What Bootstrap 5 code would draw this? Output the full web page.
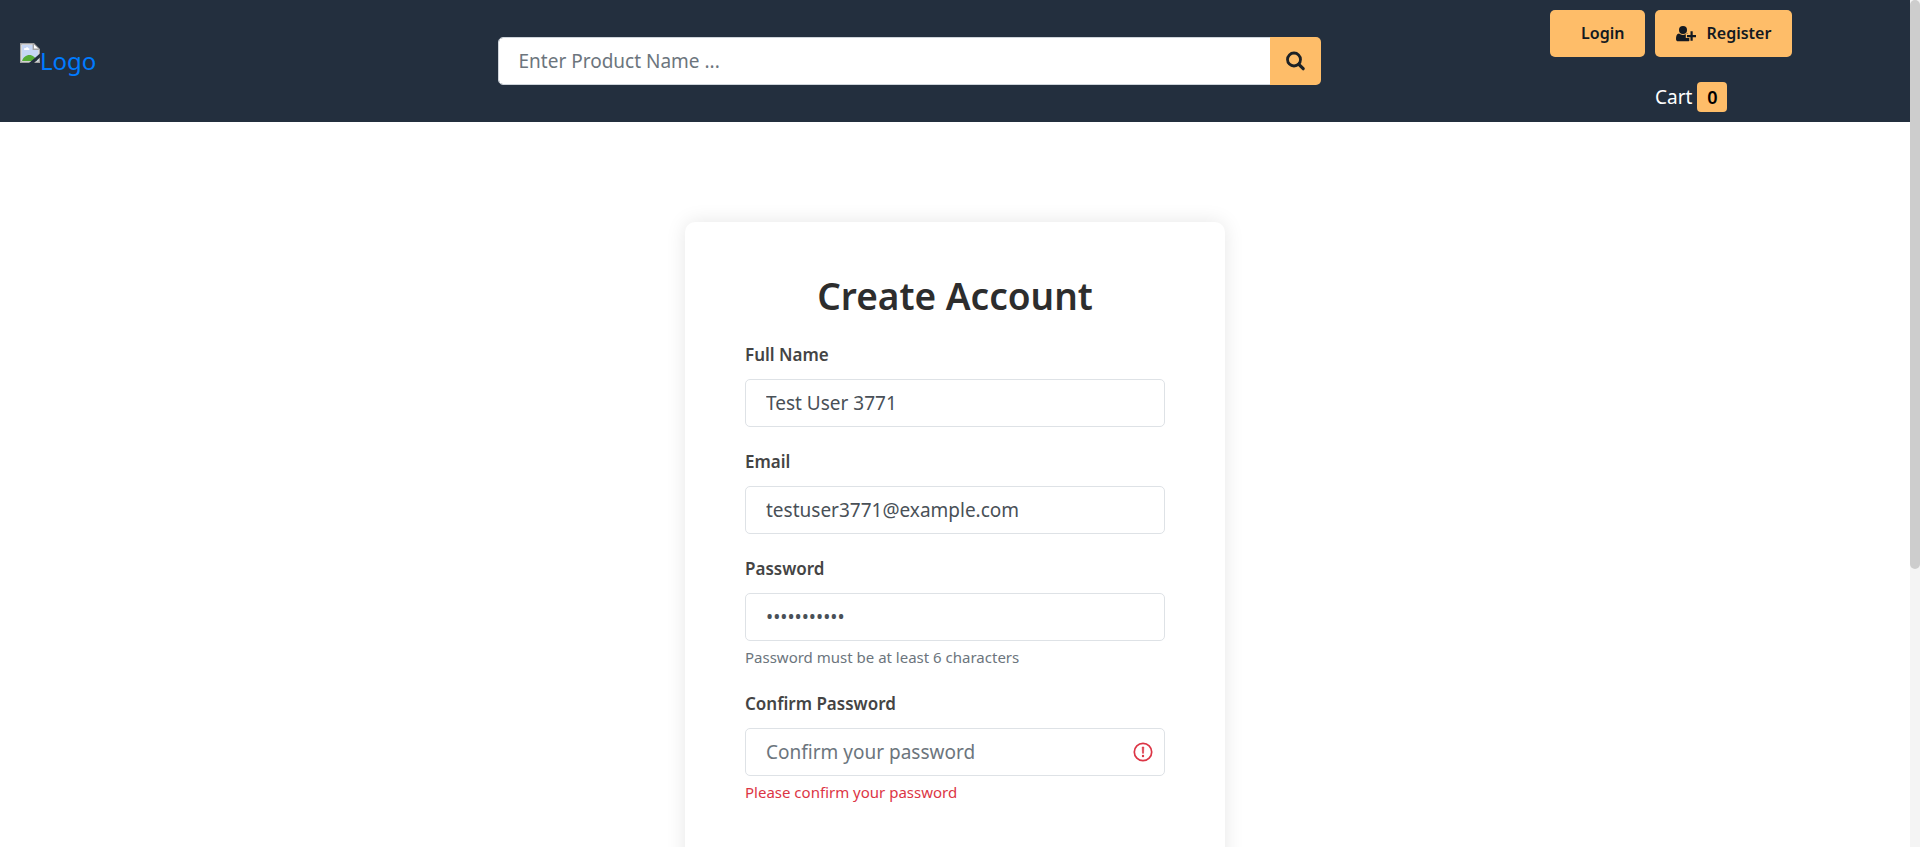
<!DOCTYPE html>
<html lang="en">
<head>
<meta charset="utf-8">
<meta name="viewport" content="width=device-width, initial-scale=1">
<title>Create Account</title>
<link href="https://cdn.jsdelivr.net/npm/bootstrap@5.3.0/dist/css/bootstrap.min.css" rel="stylesheet">
<style>
  :root { --amber: #febd69; --navy: #232f3e; }
  body { font-family: "Noto Sans", "Open Sans", sans-serif; padding-right: 10px; }
  .site-header { background: var(--navy); padding: 10px 0; }
  .site-header > .row > * { padding-left: 20px; padding-right: 20px; }
  .brand { color: #007bff; font-size: 24px; line-height: 36px; }
  .brand svg { margin-bottom: 16px; }
  .form-control {
    height: 48px; padding: 0 20px; border: 1px solid #dee2e6; border-radius: 5px;
    font-size: 19px; color: #495057;
  }
  .form-control::placeholder { color: #6c757d; }
  .search-form { width: 90%; }
  .search-form .form-control { border-color: #ced4da; }
  .btn-amber {
    --bs-btn-bg: var(--amber); --bs-btn-color: #131921; --bs-btn-hover-bg: #f3a847;
    --bs-btn-border-width: 0; --bs-btn-border-radius: 5px;
    --bs-btn-font-size: 16px; --bs-btn-font-weight: 600; --bs-btn-line-height: 47px;
    --bs-btn-padding-x: 21px; --bs-btn-padding-y: 0;
  }
  .search-form .btn-amber { --bs-btn-padding-x: 15px; }
  .btn-text { margin-left: 10px; }
  .account-links { gap: 10px; }
  .cart-link { margin-top: 25px; padding-left: 40px; gap: 5px; font-size: 19px; line-height: 30px; }
  .cart-count { width: 30px; height: 30px; padding: 0; border-radius: 4px; background: var(--amber); color: #000; font-size: 18px; font-weight: 600; line-height: 30px; }
  .signup-card {
    max-width: 540px; margin: 100px auto 0; padding: 50px 60px;
    border-radius: 10px; background: #fff; box-shadow: 0 0 20px rgba(0, 0, 0, .1);
  }
  .signup-card h1 { margin-bottom: 20px; font-size: 37px; font-weight: 600; line-height: 48px; color: #2d2d2d; }
  .field { margin-bottom: 20px; }
  .form-label { display: block; margin-bottom: 9px; font-size: 17px; font-weight: 600; line-height: 30px; color: #444; }
  .field-note { margin-top: 4px; font-size: 15px; line-height: 24px; color: #6c757d; }
  .field-error { color: #dc3545; }
  .alert-icon { right: 12px; top: 14px; pointer-events: none; }
  .scroll-track { width: 10px; background: #f4f4f4; }
  .scroll-thumb { height: 67.2%; border-radius: 5px; background: #cdcdcd; }
</style>
</head>
<body class="vh-100 overflow-hidden">
<div class="d-flex flex-column h-100">
  <header class="site-header flex-shrink-0">
    <div class="row g-0 align-items-center">
      <div class="col-3">
        <a href="#" class="brand d-inline-flex align-items-center text-decoration-none">
          <svg width="20" height="20" viewBox="0 0 20 20" aria-hidden="true">
            <path d="M.7.7h13l5.6 5.600v13H.7z" fill="#fff" stroke="#a3a3a3" stroke-width="1.400"/>
            <path d="M2 2h11v5h5v11H2z" fill="#c6d7f5"/>
            <path d="M4 6.500c0-1.200 1-1.600 1.700-1.300C6.300 3.700 8.200 4 8.400 5.300 9.500 5.100 10 6.600 9 7H4.600c-.4 0-.6-.2-.6-.5z" fill="#fff"/>
            <path d="M2 18c1-3.500 4-6 7.500-6 3.200 0 6 2.500 7.500 6z" fill="#56ad37"/>
            <path d="M13.300 1v5.300h5.500" fill="#fff" stroke="#a3a3a3" stroke-width="1.400"/>
            <path d="M9 20l11-9.500v4L14 20z" fill="#232f3e"/>
          </svg><span>Logo</span>
        </a>
      </div>
      <div class="col-6">
        <form class="search-form input-group flex-nowrap" role="search">
          <input type="search" class="form-control" placeholder="Enter Product Name ..." aria-label="Product name">
          <button type="button" class="btn btn-amber d-flex align-items-center" aria-label="Search">
            <svg width="21" height="20" viewBox="0 0 21 20" fill="none" stroke="#1c2126" aria-hidden="true">
              <circle cx="9" cy="8.500" r="6.500" stroke-width="2.800"/>
              <path d="M13.800 13.300l4.400 4.400" stroke-width="3.200" stroke-linecap="round"/>
            </svg>
          </button>
        </form>
      </div>
      <div class="col-3 d-flex flex-column align-items-center">
        <div class="account-links d-flex">
          <button type="button" class="btn btn-amber"><span class="btn-text">Login</span></button>
          <button type="button" class="btn btn-amber d-flex align-items-center">
            <svg width="20" height="16" viewBox="0 0 20 16" fill="#131921" aria-hidden="true">
              <circle cx="7" cy="4" r="4"/>
              <path d="M3 7.500c2.300 1.900 5.700 1.900 8 0 .5.100.9.300 1.300.6H9.800v3.800h3.500v3c-.5.300-1 .4-1.600.4H2.300C.8 15.300 0 14.400 0 13c0-2.700.7-5.200 3-5.500z"/>
              <path d="M14.500 5.300h2.200v3.700H20v2.200h-3.300v3.600h-2.200v-3.600h-3.500V9h3.500z"/>
            </svg>
            <span class="btn-text">Register</span>
          </button>
        </div>
        <a href="#" class="cart-link d-flex text-white text-decoration-none">Cart <span class="cart-count badge">0</span></a>
      </div>
    </div>
  </header>
  <main class="flex-grow-1 d-flex flex-column">
    <form class="signup-card w-100 flex-grow-1" novalidate>
      <h1 class="text-center">Create Account</h1>
      <div class="field">
        <label class="form-label" for="name">Full Name</label>
        <input type="text" class="form-control" id="name" value="Test User 3771">
      </div>
      <div class="field">
        <label class="form-label" for="email">Email</label>
        <input type="email" class="form-control" id="email" value="testuser3771@example.com">
      </div>
      <div class="field">
        <label class="form-label" for="password">Password</label>
        <input type="password" class="form-control" id="password" value="Testpass123" aria-describedby="password-note">
        <div class="field-note" id="password-note">Password must be at least 6 characters</div>
      </div>
      <div class="field">
        <label class="form-label" for="confirm">Confirm Password</label>
        <div class="position-relative">
          <input type="password" class="form-control" id="confirm" placeholder="Confirm your password" aria-describedby="confirm-error">
          <svg class="alert-icon position-absolute" width="20" height="20" viewBox="0 0 20 20" fill="none" stroke="#dc3545" aria-hidden="true">
            <circle cx="10" cy="10" r="8.700" stroke-width="1.700"/>
            <path d="M9.200 5h1.600l-.3 6.300h-1z" fill="#dc3545" stroke-width=".6"/>
            <circle cx="10" cy="14" r="1.200" fill="#dc3545" stroke="none"/>
          </svg>
        </div>
        <div class="field-note field-error" id="confirm-error">Please confirm your password</div>
      </div>
    </form>
  </main>
</div>
<div class="scroll-track position-fixed top-0 end-0 h-100" aria-hidden="true"><div class="scroll-thumb"></div></div>
<script src="https://cdn.jsdelivr.net/npm/bootstrap@5.3.0/dist/js/bootstrap.bundle.min.js"></script>
</body>
</html>
